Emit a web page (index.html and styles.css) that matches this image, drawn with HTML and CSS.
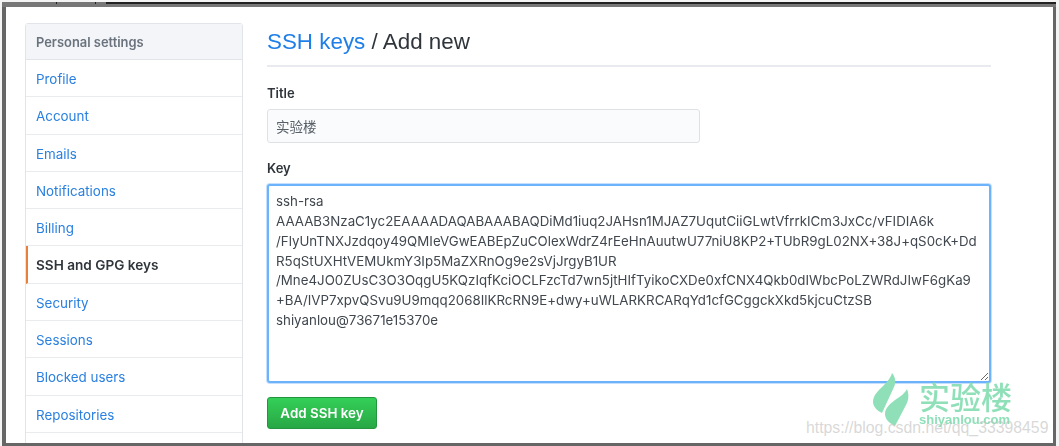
FILE: index.html
```html
<!DOCTYPE html>
<html lang="en">
<head>
  <meta charset="UTF-8" />
  <meta name="viewport" content="width=device-width, initial-scale=1.0" />
  <title>SSH keys / Add new</title>
  <link rel="stylesheet" href="styles.css">
</head>
<body>
  <div class="strip"></div>
  <div class="frame">
    <div class="page">
      <nav class="menu">
        <div class="menu-head">Personal settings</div>
        <a href="#">Profile</a>
        <a href="#">Account</a>
        <a href="#">Emails</a>
        <a href="#">Notifications</a>
        <a href="#">Billing</a>
        <a href="#" class="selected">SSH and GPG keys</a>
        <a href="#">Security</a>
        <a href="#">Sessions</a>
        <a href="#">Blocked users</a>
        <a href="#">Repositories</a>
      </nav>

      <main class="content">
        <h1><a href="#">SSH keys</a> / Add new</h1>
        <label for="title">Title</label>
        <input id="title" class="title-input" type="text" value="实验楼" />
        <label for="key">Key</label>
        <textarea id="key" class="key-input" wrap="off" spellcheck="false">ssh-rsa
AAAAB3NzaC1yc2EAAAADAQABAAABAQDiMd1iuq2JAHsn1MJAZ7UqutCiiGLwtVfrrkICm3JxCc/vFIDIA6k
/FlyUnTNXJzdqoy49QMIeVGwEABEpZuCOlexWdrZ4rEeHnAuutwU77niU8KP2+TUbR9gL02NX+38J+qS0cK+Dd
R5qStUXHtVEMUkmY3Ip5MaZXRnOg9e2sVjJrgyB1UR
/Mne4JO0ZUsC3O3OqgU5KQzIqfKciOCLFzcTd7wn5jtHIfTyikoCXDe0xfCNX4Qkb0dIWbcPoLZWRdJIwF6gKa9
+BA/IVP7xpvQSvu9U9mqq2068IlKRcRN9E+dwy+uWLARKRCARqYd1cfGCggckXkd5kjcuCtzSB
shiyanlou@73671e15370e</textarea>
        <button class="add-btn" type="button">Add SSH key</button>
      </main>
    </div>

    <!-- watermarks -->
    <div class="brand">
      <svg class="brand-logo" viewBox="0 0 36 54" width="36" height="54">
        <path d="M19 0 C23 5 23 10 21 14 L9 40 C4 38 0 33 0 29 C0 22 6 17 11 12 C15 8 18 4 19 0 Z" />
        <path d="M34 16 C36 21 36 27 33 32 L22 53 C16 50 12 46 12 41 C12 35 17 31 22 27 C27 24 32 20 34 16 Z" />
      </svg>
      <div class="brand-text">
        <div class="brand-name">实验楼</div>
        <div class="brand-url">shiyanlou.com</div>
      </div>
    </div>
    <div class="csdn">https://blog.csdn.net/qq_33398459</div>
  </div>
</body>
</html>
```

FILE: styles.css
```css
* {
  box-sizing: border-box;
  margin: 0;
  padding: 0;
}

html, body {
  height: 100%;
  overflow: hidden;
}

body {
  font-family: Inter, 'Liberation Sans', sans-serif;
  background-color: #f4f4f4;
  padding: 2px 3px 0 2px;
}

/* dark window edge along the top, with the two small ticks on the left */
.strip {
  height: 5px;
  background: linear-gradient(to right, #777 0, #777 54px, #222 54px, #222 55px, #777 55px, #777 93px, #222 93px, #222 94px, #777 94px, #777 104px, #222 104px);
  border-bottom: 3px solid #777;
}

.frame {
  position: relative;
  height: 439px;
  background: #fff;
  border-left: 4px solid #666;
  border-right: 3px solid #666;
  border-bottom: 3px solid #666;
  overflow: hidden;
}

.page {
  display: flex;
  gap: 24px;
  padding: 16px 62px 0 19px;
  filter: blur(0.6px);
}

.menu {
  flex: none;
  width: 218px;
  height: 460px;
  border: 1px solid #e1e4e8;
  border-radius: 3px;
}

.menu-head {
  height: 36px;
  padding: 0 10px;
  line-height: 37px;
  font-size: 12.9px;
  font-weight: 600;
  color: #6a737d;
  background: #f3f5f8;
  border-bottom: 1px solid #e1e4e8;
}

.menu a {
  display: block;
  height: 37.3px;
  padding: 0 10px;
  line-height: 38.2px;
  font-size: 13.4px;
  color: #2a80e0;
  text-decoration: none;
  border-bottom: 1px solid #e9ecef;
}

.menu a.selected {
  padding-left: 8px;
  font-weight: 600;
  font-size: 13.6px;
  color: #2f353b;
  border-left: 2px solid #e8803a;
}

.content {
  flex: 1;
}

h1 {
  height: 44px;
  padding-top: 2px;
  font-family: 'Liberation Sans', sans-serif;
  font-size: 22.4px;
  font-weight: 400;
  line-height: 33px;
  color: #2f353b;
  border-bottom: 2px solid #e8eaef;
}

h1 a {
  color: #1f7fe8;
  text-decoration: none;
}

label {
  display: block;
  font-size: 13px;
  font-weight: 600;
  line-height: 18px;
  color: #2f353b;
}

label[for="title"] {
  margin-top: 17px;
  margin-bottom: 7px;
}

label[for="key"] {
  margin-top: 16px;
  margin-bottom: 7px;
}

.title-input {
  display: block;
  width: 433px;
  height: 34px;
  padding: 0 8px;
  font-family: 'Noto Sans CJK SC', sans-serif;
  font-size: 13.5px;
  color: #586069;
  background: #fafbfc;
  border: 1px solid #dfe2e5;
  border-radius: 3px;
}

.key-input {
  display: block;
  width: 724px;
  height: 199px;
  padding: 6px 7px;
  font-family: Inter, 'Liberation Sans', sans-serif;
  font-size: 13.32px;
  line-height: 19.85px;
  color: #40474e;
  background: #fff;
  border: 2px solid #6db3fb;
  border-radius: 3px;
  box-shadow: 0 0 0 1px #c5e0fd;
  outline: none;
  overflow: hidden;
}

.add-btn {
  display: block;
  width: 110px;
  height: 32px;
  margin-top: 14px;
  font-family: Inter, 'Liberation Sans', sans-serif;
  font-size: 13.4px;
  font-weight: 600;
  color: #fff;
  background: linear-gradient(#34d058, #28a745);
  border: 1px solid #22963d;
  border-radius: 3px;
}

.brand {
  position: absolute;
  left: 867px;
  top: 366px;
  display: flex;
  gap: 10px;
  filter: blur(0.5px);
}

.brand-logo path {
  fill: #8fe0b8;
}

.brand-text {
  padding-top: 5px;
  color: #8fe0b8;
}

.brand-name {
  font-family: 'Noto Sans CJK SC', sans-serif;
  font-size: 31px;
  font-weight: 500;
  line-height: 35px;
}

.brand-url {
  font-family: 'Liberation Sans', sans-serif;
  font-size: 13px;
  font-weight: 700;
  line-height: 14px;
}

.csdn {
  position: absolute;
  left: 800px;
  top: 411px;
  font-family: 'Liberation Sans', sans-serif;
  font-size: 15.8px;
  line-height: 20px;
  color: rgba(190, 190, 190, 0.6);
  white-space: nowrap;
}
```
